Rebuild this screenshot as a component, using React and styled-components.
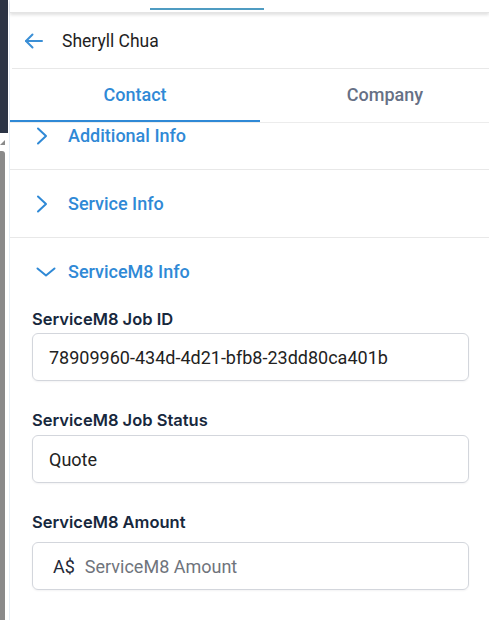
import { useEffect, useRef } from "react"
import styled, { createGlobalStyle } from "styled-components"

const GlobalStyle = createGlobalStyle`
html, body{
    margin: 0;
    padding: 0;
    background: #ffffff;
    font-family: Roboto, "Noto Sans", sans-serif;
}
*{
    box-sizing: border-box;
}
`;

const Page = styled.div`
display: flex;
width: 489px;
height: 620px;
overflow: hidden;
background: #ffffff;
`;

const SideStrip = styled.div`
display: flex;
flex-direction: column;
width: 9px;
flex-shrink: 0;
.nav{
    height: 133px;
    width: 8px;
    background: #2b3445;
}
.gap{
    height: 18px;
    position: relative;
}
.arrow{
    position: absolute;
    left: 0;
    top: 7px;
    width: 0;
    height: 0;
    border-right: 5px solid #8a8a8a;
    border-top: 5px solid transparent;
}
.thumb{
    flex: 1;
    width: 5px;
    background: #8a8a8a;
    border-radius: 0 3px 0 0;
}
`;

const Panel = styled.div`
display: flex;
flex-direction: column;
flex: 1;
min-width: 0;
border-left: 1px solid #e6eef6;
`;

const TopStrip = styled.div`
position: relative;
height: 13px;
flex-shrink: 0;
box-shadow: 0 2px 3px rgba(0, 0, 0, 0.12);
border-bottom: 1px solid #e4e4e4;
z-index: 2;
span{
    position: absolute;
    left: 140px;
    top: 8px;
    width: 114px;
    height: 2px;
    background: #4f9cc2;
}
`;

const Header = styled.div`
display: flex;
align-items: center;
gap: 18px;
height: 56px;
padding: 0 0 0 12px;
margin-left: 2px;
border-bottom: 1px solid #e8e8e8;
flex-shrink: 0;
font-size: 17.5px;
color: #1f1f1f;
svg{
    display: block;
}
`;

const Tabs = styled.div`
display: flex;
height: 54px;
flex-shrink: 0;
overflow: hidden;
border-bottom: 1px solid #ececec;
`;

const Tab = styled.div`
flex: 0 0 250px;
display: flex;
align-items: center;
justify-content: center;
font-size: 18px;
font-weight: 500;
color: ${p => p.$active ? "#2f89d6" : "#667085"};
border-bottom: 2px solid ${p => p.$active ? "#2f89d6" : "transparent"};
`;

const Body = styled.div`
flex: 1;
overflow-y: auto;
scrollbar-width: none;
&::-webkit-scrollbar{
    display: none;
}
`;

const Section = styled.div`
border-bottom: ${p => p.$open ? "none" : "1px solid #e8e8e8"};
`;

const SectionHead = styled.div`
display: flex;
align-items: center;
height: 67px;
padding-left: 26px;
font-size: 18px;
font-weight: 500;
color: #2f89d6;
.icon{
    width: 32px;
    display: flex;
}
svg{
    display: block;
}
`;

const Form = styled.div`
display: flex;
flex-direction: column;
gap: 29px;
padding: 4px 20px 40px 22px;
`;

const Field = styled.div`
display: flex;
flex-direction: column;
gap: ${p => p.$gap || 5}px;
`;

const Label = styled.label`
font-family: Inter, Roboto, sans-serif;
font-size: 16.5px;
font-weight: 600;
line-height: 20px;
color: #17283d;
`;

const InputBox = styled.div`
display: flex;
align-items: center;
gap: 10px;
height: 48px;
padding: 0 16px;
border: 1px solid #d3d6dc;
border-radius: 6px;
box-shadow: 0 1px 2px rgba(16, 24, 40, 0.05);
font-size: 18px;
color: #222222;
.prefix{
    color: #1f2937;
    padding-left: 4px;
}
.placeholder{
    color: #6f747c;
}
`;

function Chevron({ down }) {
    if (down) {
        return (
            <svg width="20" height="10" viewBox="0 0 20 10" fill="none" stroke="#2f89d6" strokeWidth="2" strokeLinecap="round" strokeLinejoin="round">
                <path d="M1.5 1.5l8.5 7 8.5-7" />
            </svg>
        )
    }
    return (
        <svg width="12" height="18" viewBox="0 0 12 18" fill="none" stroke="#2f89d6" strokeWidth="2" strokeLinecap="round" strokeLinejoin="round">
            <path d="M2 1.5l8 7.5-8 7.5" />
        </svg>
    )
}

export default function App(){

    const bodyRef = useRef(null);

    useEffect(() => {
        // list is scrolled a little past the first section's top
        if (bodyRef.current) bodyRef.current.scrollTop = 21;
    }, []);

    return(
        <Page>
            <GlobalStyle />
            <SideStrip>
                <div className="nav" />
                <div className="gap"><div className="arrow" /></div>
                <div className="thumb" />
            </SideStrip>
            <Panel>
                <TopStrip><span /></TopStrip>
                <Header>
                    <svg width="20" height="18" viewBox="0 0 20 18" fill="none" stroke="#3b8fd6" strokeWidth="2" strokeLinecap="round" strokeLinejoin="round">
                        <path d="M18 9H2" />
                        <path d="M8.5 2.5L2 9l6.5 6.5" />
                    </svg>
                    <span>Sheryll Chua</span>
                </Header>
                <Tabs>
                    <Tab $active>Contact</Tab>
                    <Tab>Company</Tab>
                </Tabs>
                <Body ref={bodyRef}>
                    <Section>
                        <SectionHead><span className="icon"><Chevron /></span>Additional Info</SectionHead>
                    </Section>
                    <Section>
                        <SectionHead><span className="icon"><Chevron /></span>Service Info</SectionHead>
                    </Section>
                    <Section $open>
                        <SectionHead><span className="icon"><Chevron down /></span>ServiceM8 Info</SectionHead>
                        <Form>
                            <Field $gap={4}>
                                <Label>ServiceM8 Job ID</Label>
                                <InputBox>78909960-434d-4d21-bfb8-23dd80ca401b</InputBox>
                            </Field>
                            <Field>
                                <Label>ServiceM8 Job Status</Label>
                                <InputBox>Quote</InputBox>
                            </Field>
                            <Field $gap={10}>
                                <Label>ServiceM8 Amount</Label>
                                <InputBox>
                                    <span className="prefix">A$</span>
                                    <span className="placeholder">ServiceM8 Amount</span>
                                </InputBox>
                            </Field>
                        </Form>
                    </Section>
                </Body>
            </Panel>
        </Page>
    )
}
